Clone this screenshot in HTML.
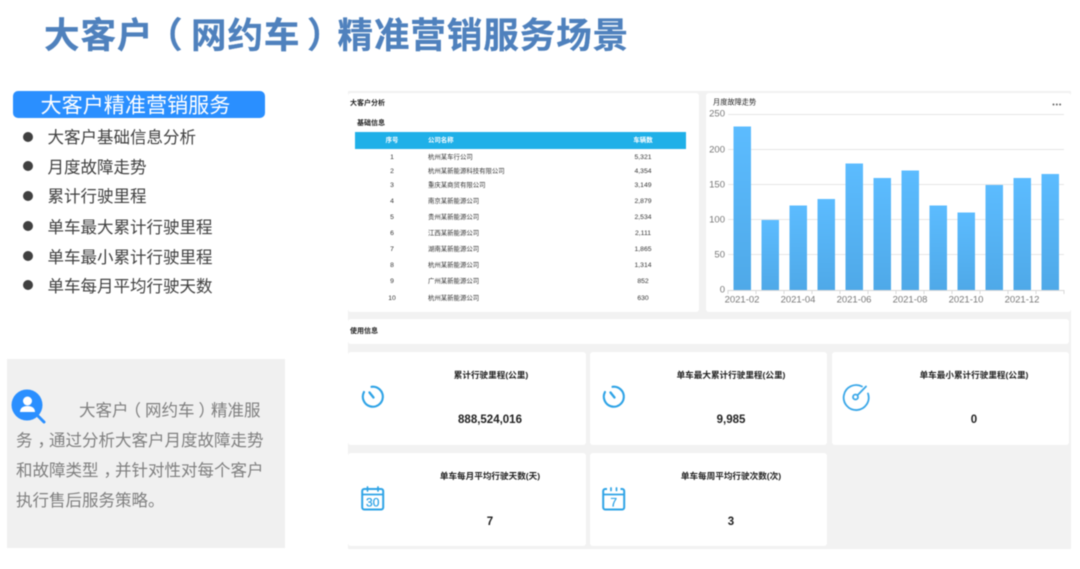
<!DOCTYPE html>
<html lang="zh-CN">
<head>
<meta charset="utf-8">
<title>大客户精准营销服务场景</title>
<style>
html,body{margin:0;padding:0;background:#fff;}
body{width:1080px;height:569px;overflow:hidden;position:relative;font-family:"Liberation Sans","Noto Sans CJK SC",sans-serif;}
#w{position:absolute;left:0;top:0;width:1080px;height:569px;filter:blur(.4px);}
.a{position:absolute;}
.t{position:absolute;white-space:nowrap;transform:translateY(-50%);line-height:1.2;}
.c{transform:translate(-50%,-50%);}
.h{font-size:35.5px;font-weight:700;color:#4f81bd;letter-spacing:.95px;-webkit-text-stroke:.3px #4f81bd;}
.li{left:47.500px;font-size:16.5px;color:#404040;}
.b{position:absolute;left:23px;width:10px;height:10px;border-radius:50%;background:#404040;}
.p{font-size:16.5px;color:#7f7f7f;left:16px;}
.p span{position:relative;}
.card{position:absolute;background:#fff;border-radius:3px;}
.s{font-size:7px;font-weight:700;color:#222;}
.r{font-size:6.4px;color:#333;}
.rn{font-size:6.8px;color:#333;}
.lb{font-size:8.6px;font-weight:700;color:#222;}
.v{font-size:11.5px;font-weight:700;color:#222;}
.ax{font-size:9.5px;color:#777;}
</style>
</head>
<body>
<div id="w">
<div class="t h" style="left:44px;top:36px">大客户</div>
<div class="t h" style="left:147px;top:36px">（</div>
<div class="t h" style="left:191px;top:36px">网约车</div>
<div class="t h" style="left:307px;top:36px">）</div>
<div class="t h" style="left:337.500px;top:36px">精准营销服务场景</div>

<div class="a" style="left:13px;top:91px;width:252px;height:27px;background:#2a8fff;border-radius:5px"></div>
<div class="t" style="left:40.500px;top:105.500px;font-size:21.100px;color:#fff">大客户精准营销服务</div>

<div class="b" style="top:132px"></div><div class="t li" style="top:139px">大客户基础信息分析</div>
<div class="b" style="top:161px"></div><div class="t li" style="top:168.500px">月度故障走势</div>
<div class="b" style="top:191px"></div><div class="t li" style="top:198px">累计行驶里程</div>
<div class="b" style="top:221px"></div><div class="t li" style="top:228.500px">单车最大累计行驶里程</div>
<div class="b" style="top:251px"></div><div class="t li" style="top:258.500px">单车最小累计行驶里程</div>
<div class="b" style="top:280px"></div><div class="t li" style="top:287.500px">单车每月平均行驶天数</div>

<div class="a" style="left:7px;top:359px;width:278px;height:189px;background:#f0f0f0"></div>
<svg class="a" style="left:10px;top:387px" width="38" height="38" viewBox="0 0 38 38">
<circle cx="17" cy="18" r="15.5" fill="#2a8fff"/>
<path d="M28 29L34 35" stroke="#2a8fff" stroke-width="3" stroke-linecap="round"/>
<circle cx="17.500" cy="14" r="4.500" fill="#fff"/>
<path d="M10 25c0-4 3-6 7.500-6s7.500 2 7.500 6z" fill="#fff"/>
</svg>
<div class="t p" style="left:79px;top:412px">大客户<span style="left:-4px">（</span>网约车<span style="left:4px">）</span>精准服</div>
<div class="t p" style="top:442px">务<span style="left:5px">，</span>通过分析大客户月度故障走势</div>
<div class="t p" style="top:472px">和故障类型<span style="left:5px">，</span>并针对性对每个客户</div>
<div class="t p" style="top:502px">执行售后服务策略。</div>

<!-- dashboard -->
<div class="a" style="left:348px;top:91px;width:723px;height:458px;background:#f2f2f2"></div>
<div class="card" style="left:348px;top:93px;width:351px;height:219px"></div>
<div class="card" style="left:706px;top:93px;width:365px;height:219px"></div>
<div class="card" style="left:348px;top:319px;width:721px;height:25px"></div>
<div class="card" style="left:348px;top:352px;width:238px;height:93px"></div>
<div class="card" style="left:590px;top:352px;width:237px;height:93px"></div>
<div class="card" style="left:832px;top:352px;width:237px;height:93px"></div>
<div class="card" style="left:348px;top:453px;width:238px;height:93px"></div>
<div class="card" style="left:590px;top:453px;width:237px;height:93px"></div>

<div class="t s" style="left:350px;top:103.500px">大客户分析</div>
<div class="t s" style="left:357px;top:123.500px">基础信息</div>
<div class="a" style="left:355px;top:132px;width:331px;height:17px;background:#1fb0e8"></div>
<div class="t s c" style="left:392px;top:141px;color:#fff;font-size:6.400px">序号</div>
<div class="t s" style="left:428px;top:141px;color:#fff;font-size:6.400px">公司名称</div>
<div class="t s c" style="left:643px;top:141px;color:#fff;font-size:6.400px">车辆数</div>

<div class="t rn c" style="left:392px;top:157.500px">1</div><div class="t r" style="left:428px;top:157.500px">杭州某车行公司</div><div class="t rn c" style="left:643px;top:157.500px">5,321</div>
<div class="t rn c" style="left:392px;top:172px">2</div><div class="t r" style="left:428px;top:172px">杭州某新能源科技有限公司</div><div class="t rn c" style="left:643px;top:172px">4,354</div>
<div class="t rn c" style="left:392px;top:186px">3</div><div class="t r" style="left:428px;top:186px">重庆某商贸有限公司</div><div class="t rn c" style="left:643px;top:186px">3,149</div>
<div class="t rn c" style="left:392px;top:202px">4</div><div class="t r" style="left:428px;top:202px">南京某新能源公司</div><div class="t rn c" style="left:643px;top:202px">2,879</div>
<div class="t rn c" style="left:392px;top:218px">5</div><div class="t r" style="left:428px;top:218px">贵州某新能源公司</div><div class="t rn c" style="left:643px;top:218px">2,534</div>
<div class="t rn c" style="left:392px;top:234px">6</div><div class="t r" style="left:428px;top:234px">江西某新能源公司</div><div class="t rn c" style="left:643px;top:234px">2,111</div>
<div class="t rn c" style="left:392px;top:250px">7</div><div class="t r" style="left:428px;top:250px">湖南某新能源公司</div><div class="t rn c" style="left:643px;top:250px">1,865</div>
<div class="t rn c" style="left:392px;top:266px">8</div><div class="t r" style="left:428px;top:266px">杭州某新能源公司</div><div class="t rn c" style="left:643px;top:266px">1,314</div>
<div class="t rn c" style="left:392px;top:282px">9</div><div class="t r" style="left:428px;top:282px">广州某新能源公司</div><div class="t rn c" style="left:643px;top:282px">852</div>
<div class="t rn c" style="left:392px;top:298.500px">10</div><div class="t r" style="left:428px;top:298.500px">杭州某新能源公司</div><div class="t rn c" style="left:643px;top:298.500px">630</div>

<!-- chart -->
<div class="t s" style="left:713px;top:103px;font-size:7.200px;font-weight:400;color:#222">月度故障走势</div>
<svg class="a" style="left:1050px;top:102px" width="14" height="5"><circle cx="3.500" cy="2.500" r="1" fill="#666"/><circle cx="6.800" cy="2.500" r="1" fill="#666"/><circle cx="10.100" cy="2.500" r="1" fill="#666"/></svg>
<svg class="a" style="left:700px;top:100px" width="380" height="215" viewBox="700 100 380 215">
<defs><linearGradient id="g" x1="0" y1="0" x2="0" y2="1"><stop offset="0" stop-color="#5cbcff"/><stop offset="1" stop-color="#4fa9e8"/></linearGradient></defs>
<g stroke="#e6e6e6" stroke-width="1">
<path d="M728 114.500H1064M728 149.500H1064M728 184.500H1064M728 219.500H1064M728 254.500H1064"/>
<path d="M728 290.500H1064" stroke="#d8d8d8"/>
<path d="M728 290V294M756 290V294M784 290V294M812 290V294M840 290V294M868 290V294M896 290V294M924 290V294M952 290V294M980 290V294M1008 290V294M1036 290V294M1064 290V294" stroke="#d8d8d8"/>
</g>
<g fill="url(#g)">
<rect x="733.500" y="126.500" width="17.500" height="163.500"/>
<rect x="761.500" y="220" width="17.500" height="70"/>
<rect x="789.500" y="205.500" width="17.500" height="84.500"/>
<rect x="817.500" y="199" width="17.500" height="91"/>
<rect x="845.500" y="163.500" width="17.500" height="126.500"/>
<rect x="873.500" y="178" width="17.500" height="112"/>
<rect x="901.500" y="170.500" width="17.500" height="119.500"/>
<rect x="929.500" y="205.500" width="17.500" height="84.500"/>
<rect x="957.500" y="212.500" width="17.500" height="77.500"/>
<rect x="985.500" y="185" width="17.500" height="105"/>
<rect x="1013.500" y="178" width="17.500" height="112"/>
<rect x="1041.500" y="174" width="17.500" height="116"/>
</g>
</svg>
<div class="t ax" style="right:355px;top:114px">250</div>
<div class="t ax" style="right:355px;top:149.500px">200</div>
<div class="t ax" style="right:355px;top:184.500px">150</div>
<div class="t ax" style="right:355px;top:219.500px">100</div>
<div class="t ax" style="right:355px;top:254.500px">50</div>
<div class="t ax" style="right:355px;top:290px">0</div>
<div class="t ax c" style="left:742px;top:300px">2021-02</div>
<div class="t ax c" style="left:798px;top:300px">2021-04</div>
<div class="t ax c" style="left:854px;top:300px">2021-06</div>
<div class="t ax c" style="left:910px;top:300px">2021-08</div>
<div class="t ax c" style="left:966px;top:300px">2021-10</div>
<div class="t ax c" style="left:1022px;top:300px">2021-12</div>

<div class="t s" style="left:350px;top:332px">使用信息</div>

<!-- stats -->
<div class="t lb c" style="left:491px;top:374.500px">累计行驶里程(公里)</div>
<div class="t v c" style="left:490px;top:421px">888,524,016</div>
<div class="t lb c" style="left:731px;top:374.500px">单车最大累计行驶里程(公里)</div>
<div class="t v c" style="left:731px;top:421px">9,985</div>
<div class="t lb c" style="left:974px;top:374.500px">单车最小累计行驶里程(公里)</div>
<div class="t v c" style="left:974px;top:421px">0</div>
<div class="t lb c" style="left:490px;top:476px">单车每月平均行驶天数(天)</div>
<div class="t v c" style="left:490px;top:523px">7</div>
<div class="t lb c" style="left:731px;top:476px">单车每周平均行驶次数(次)</div>
<div class="t v c" style="left:731px;top:523px">3</div>

<!-- gauge icons -->
<svg class="a" style="left:358px;top:382px" width="30" height="30" viewBox="0 0 30 30" fill="none" stroke="#2ea3e6" stroke-width="2.100" stroke-linecap="round">
<path d="M13.500 4.800A10 10 0 1 1 6 10"/>
<path d="M11.500 10.500L15.500 15.500" stroke-width="2.300"/>
</svg>
<svg class="a" style="left:599px;top:382px" width="30" height="30" viewBox="0 0 30 30" fill="none" stroke="#2ea3e6" stroke-width="2.100" stroke-linecap="round">
<path d="M13.500 4.800A10 10 0 1 1 6 10"/>
<path d="M11.500 10.500L15.500 15.500" stroke-width="2.300"/>
</svg>
<svg class="a" style="left:841px;top:382px" width="30" height="30" viewBox="0 0 30 30" fill="none" stroke="#3aa7e8" stroke-width="1.800" stroke-linecap="round">
<path d="M21 4.500A12.500 12.500 0 1 0 27 11.500"/>
<circle cx="14.500" cy="15" r="2.500"/>
<path d="M16.500 13.300L25 4.500"/>
</svg>
<!-- calendars -->
<svg class="a" style="left:358px;top:484px" width="30" height="30" viewBox="0 0 30 30" fill="none" stroke="#2ea3e6" stroke-width="2">
<rect x="4.200" y="5" width="21" height="20.500" rx="2"/>
<path d="M4.200 10.500H25.200" stroke-width="1.700"/>
<path d="M9.500 3V7M20 3V7" stroke-linecap="round" stroke-width="1.700"/>
<text x="14.700" y="22.500" font-family="Liberation Sans,sans-serif" font-size="12" fill="#2ea3e6" stroke="#2ea3e6" stroke-width=".3" text-anchor="middle">30</text>
</svg>
<svg class="a" style="left:599px;top:484px" width="30" height="30" viewBox="0 0 30 30" fill="none" stroke="#2ea3e6" stroke-width="2">
<path d="M8 5H6.200a2 2 0 0 0-2 2V23.500a2 2 0 0 0 2 2H23.200a2 2 0 0 0 2-2V7a2 2 0 0 0-2-2H21.500"/>
<path d="M4.200 10.500H25.200" stroke-width="1.700"/>
<path d="M12 4V6.500M17.500 4V6.500" stroke-linecap="round" stroke-width="1.700"/>
<text x="14.700" y="22.500" font-family="Liberation Sans,sans-serif" font-size="12" fill="#2ea3e6" stroke="#2ea3e6" stroke-width=".3" text-anchor="middle">7</text>
</svg>
</div>
</body>
</html>
